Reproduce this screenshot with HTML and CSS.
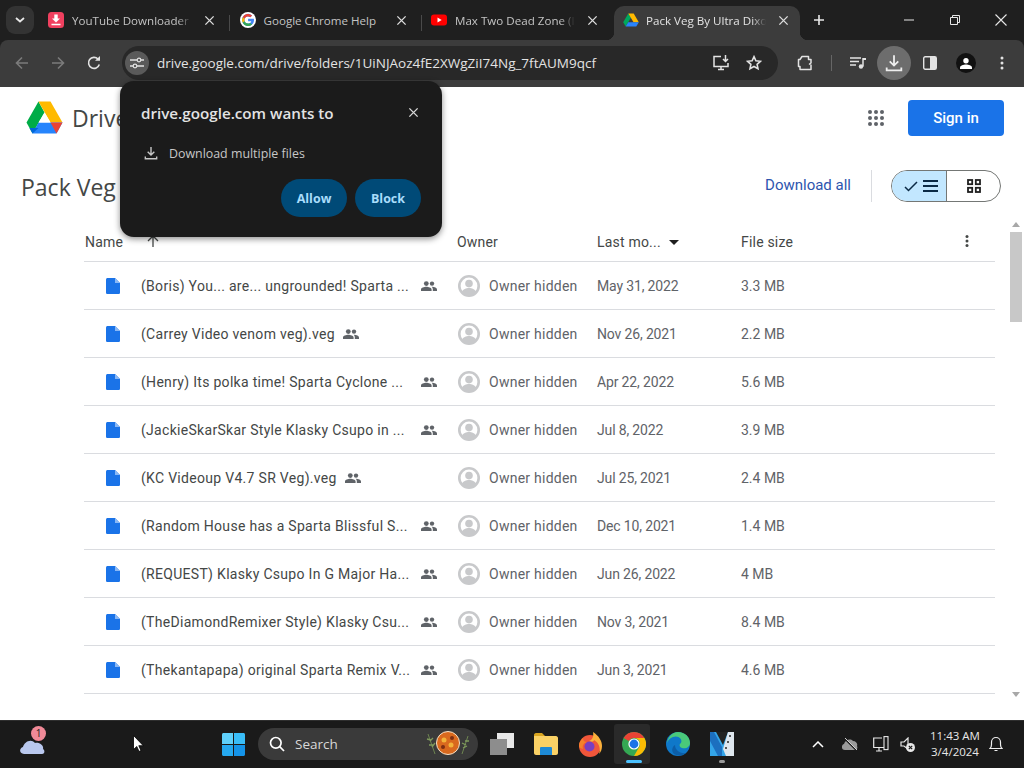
FILE: index.html
```html
<!DOCTYPE html>
<html lang="en">
<head>
<meta charset="utf-8">
<title>Pack Veg By Ultra Dixon</title>
<link rel="stylesheet" href="styles.css">
</head>
<body>
<svg class="defs" width="0" height="0" aria-hidden="true">
  <symbol id="file" viewBox="0 0 14 16"><path d="M1.600 0H9l5 5v9.400c0 .9-.7 1.600-1.600 1.600H1.600C.7 16 0 15.300 0 14.400V1.600C0 .7.700 0 1.600 0z" fill="#1a73e8"/><path d="M9 0l5 5H9z" fill="#8ab8f5"/></symbol>
  <symbol id="people" viewBox="0 0 16 10"><circle cx="5.300" cy="2.600" r="2.400" fill="#5f6368"/><circle cx="11" cy="2.600" r="2.200" fill="#5f6368"/><path d="M0 10V8.400C0 6.800 3.200 5.800 5.300 5.800s5.300 1 5.300 2.600V10zM11.800 10V8.200c0-1-.5-1.800-1.200-2.400 2.300-.2 5.400.8 5.400 2.600V10z" fill="#5f6368"/></symbol>
  <symbol id="avatar" viewBox="0 0 22 22"><circle cx="11" cy="11" r="11" fill="#c8c9cb"/><circle cx="11" cy="11" r="8.400" fill="#fff"/><circle cx="11" cy="8.600" r="3.800" fill="#c8c9cb"/><path d="M3.500 17.500c1.500-3.500 4.800-4.400 7.500-4.400s6 .9 7.500 4.400L15 21H7z" fill="#c8c9cb"/></symbol>
  <symbol id="x" viewBox="0 0 12 12"><path d="M1.500 1.500l9 9M10.500 1.500l-9 9" fill="none" stroke="currentColor" stroke-width="1.500"/></symbol>
  <symbol id="dl" viewBox="0 0 16 16"><path d="M8 1v9M4.200 6.500L8 10.300l3.800-3.800M1.500 12v2.500h13V12" fill="none" stroke="currentColor" stroke-width="1.600"/></symbol>
</svg>

<header class="chrome">
  <div class="tabstrip">
    <button class="tab-search"><svg width="10" height="6" viewBox="0 0 10 6"><path d="M1 1l4 3.500L9 1" fill="none" stroke="#e8e8e8" stroke-width="1.800"/></svg></button>
    <div class="tab tab-first">
      <svg class="favicon" viewBox="0 0 16 16"><rect width="16" height="16" rx="3.500" fill="#f0405f"/><path d="M6.300 2.500h3.400v4h2.300L8 10.500 4 6.500h2.300zM3.500 11.800h9v1.500h-9z" fill="#fff"/></svg>
      <span class="tab-title tab-fade">YouTube Downloader -</span>
      <svg class="tab-x"><use href="#x"/></svg>
    </div>
    <span class="tab-sep"></span>
    <div class="tab">
      <svg class="favicon" viewBox="0 0 16 16"><circle cx="8" cy="8" r="8" fill="#fff"/><path d="M13.800 6.700H8.100v2.500h3.200c-.4 1.500-1.700 2.400-3.300 2.400A3.600 3.600 0 0 1 4.500 8 3.600 3.600 0 0 1 8 4.400c.9 0 1.700.3 2.300.9l1.800-1.800A6 6 0 0 0 2 8a6 6 0 0 0 6 6c3.400 0 6-2.400 6-6 0-.5-.1-.9-.2-1.300z" fill="#4285f4"/><path d="M2.700 5.200A6 6 0 0 1 12.100 3.500l-1.800 1.800A3.600 3.600 0 0 0 4.700 6.700z" fill="#ea4335"/><path d="M2.700 5.200l2 1.500a3.600 3.600 0 0 0 0 2.600l-2 1.500a6 6 0 0 1 0-5.600z" fill="#fbbc05"/><path d="M2.700 10.800l2-1.500A3.600 3.600 0 0 0 8 11.600c.9 0 1.600-.2 2.200-.6l1.900 1.500A6 6 0 0 1 2.700 10.800z" fill="#34a853"/></svg>
      <span class="tab-title">Google Chrome Help</span>
      <svg class="tab-x"><use href="#x"/></svg>
    </div>
    <span class="tab-sep"></span>
    <div class="tab">
      <svg class="favicon" viewBox="0 0 16 16"><rect y="2.500" width="16" height="11" rx="3" fill="#f00"/><path d="M6.500 5.500L10.700 8l-4.200 2.500z" fill="#fff"/></svg>
      <span class="tab-title tab-fade">Max Two Dead Zone (I</span>
      <svg class="tab-x"><use href="#x"/></svg>
    </div>
    <div class="tab tab-active">
      <svg class="favicon" viewBox="0 0 16 15"><path d="M5.300 1L.2 9.800l2.500 4.200L8 5z" fill="#00a85d"/><path d="M5.300 1h5.400l5.100 8.800h-5.300z" fill="#ffba00"/><path d="M2.700 14h10.600l2.500-4.200H5.200z" fill="#2a84fc"/></svg>
      <span class="tab-title tab-fade">Pack Veg By Ultra Dixo</span>
      <svg class="tab-x"><use href="#x"/></svg>
    </div>
    <svg class="new-tab" width="12" height="12" viewBox="0 0 12 12"><path d="M6 1v10M1 6h10" stroke="#e8e8e8" stroke-width="1.600"/></svg>
    <div class="win-controls">
      <svg width="10" height="10" viewBox="0 0 10 10"><path d="M0 5h10" stroke="#e8e8e8"/></svg>
      <svg width="10" height="10" viewBox="0 0 10 10"><path d="M.5 2.500h7v7h-7zM2.500 2.500V.5h7v7h-2" fill="none" stroke="#e8e8e8"/></svg>
      <svg width="12" height="12" viewBox="0 0 12 12"><path d="M.5.500l11 11M11.500.5l-11 11" stroke="#e8e8e8" stroke-width="1.100"/></svg>
    </div>
  </div>
  <div class="toolbar">
    <svg class="nav" width="14" height="14" viewBox="0 0 14 14"><path d="M13 7H2M7 1.500L1.500 7 7 12.500" fill="none" stroke="#7b7b7b" stroke-width="1.600"/></svg>
    <svg class="nav" width="14" height="14" viewBox="0 0 14 14"><path d="M1 7h11M7 1.500L12.500 7 7 12.500" fill="none" stroke="#7b7b7b" stroke-width="1.600"/></svg>
    <svg class="nav" width="14" height="14" viewBox="0 0 14 14"><path d="M12.300 8.500A5.500 5.500 0 1 1 11 3" fill="none" stroke="#e3e3e3" stroke-width="1.600"/><path d="M8 4.800h5V0z" fill="#e3e3e3"/></svg>
    <div class="omnibox">
      <span class="site-chip"><svg width="14" height="12" viewBox="0 0 14 12"><path d="M0 3h7M11 3h3M0 9h3M7 9h7" stroke="#e3e3e3" stroke-width="1.300"/><circle cx="9" cy="3" r="1.800" fill="none" stroke="#e3e3e3" stroke-width="1.200"/><circle cx="5" cy="9" r="1.800" fill="none" stroke="#e3e3e3" stroke-width="1.200"/></svg></span>
      <span class="url">drive.google.com/drive/folders/1UiNJAoz4fE2XWgZiI74Ng_7ftAUM9qcf</span>
      <svg class="omni-install" width="18" height="16" viewBox="0 0 18 16"><path d="M8 1.500H1v10h14V8M5 14.500h6M8 11.500v3M12.500 0v6M10 4l2.500 2.500L15 4" fill="none" stroke="#e3e3e3" stroke-width="1.500"/></svg>
      <svg class="omni-star" width="16" height="16" viewBox="0 0 16 16"><path d="M8 1.700l1.900 4.100 4.500.5-3.300 3 .9 4.400L8 11.500l-4 2.200.9-4.400-3.300-3 4.500-.5z" fill="none" stroke="#e3e3e3" stroke-width="1.600"/></svg>
    </div>
    <div class="tool-icons">
      <svg class="ti-ext" width="16" height="16" viewBox="0 0 16 16"><path d="M5 1.500h6.500v3h2.500v3.500l-1.500 1 1.500 1V14.500H3v-3H1.500V4.500H3z" fill="none" stroke="#e3e3e3" stroke-width="1.500" stroke-linejoin="round"/></svg>
      <span class="ti-sep"></span>
      <svg class="ti-media" width="16" height="12" viewBox="0 0 16 12"><path d="M0 1h11M0 4.500h9M0 8h6" stroke="#e3e3e3" stroke-width="1.300"/><path d="M13 1v8.500" stroke="#e3e3e3" stroke-width="1.500"/><circle cx="11" cy="9.500" r="2.200" fill="#e3e3e3"/><path d="M13 1h3v2h-3z" fill="#e3e3e3"/></svg>
      <span class="ti-dl"><svg class="dl-icon"><use href="#dl"/></svg></span>
      <svg class="ti-side" width="14" height="14" viewBox="0 0 14 14"><rect x=".7" y=".7" width="12.600" height="12.600" rx="1.500" fill="none" stroke="#e3e3e3" stroke-width="1.400"/><path d="M7 1h6v12H7z" fill="#e3e3e3"/></svg>
      <span class="ti-prof"><svg width="12" height="11" viewBox="0 0 12 11"><circle cx="6" cy="2.800" r="2.700" fill="#fff"/><path d="M0 11V9.500C0 7.500 3.500 6.500 6 6.500s6 1 6 3V11z" fill="#fff"/></svg></span>
      <svg class="ti-menu" width="4" height="14" viewBox="0 0 4 14"><circle cx="2" cy="2" r="1.500" fill="#e3e3e3"/><circle cx="2" cy="7" r="1.500" fill="#e3e3e3"/><circle cx="2" cy="12" r="1.500" fill="#e3e3e3"/></svg>
    </div>
  </div>
</header>

<main class="page">
  <div class="drive-head">
    <svg class="drive-logo" width="37" height="33" viewBox="0 0 37 33"><path d="M12.500.5L.5 21.500l6 11 12-21z" fill="#00ac47"/><path d="M12.500.5h12l12 21h-12z" fill="#ffba00"/><path d="M6.500 32.500h24l6-11h-24z" fill="#2684fc"/><path d="M.5 21.500l3 5.500h9l-6 5.500z" fill="#0066da"/><path d="M36.500 21.500l-6 11-6-11z" fill="#ea4335"/><path d="M18.500 11.500l6 10h-12z" fill="#fff"/></svg>
    <span class="drive-name">Drive</span>
    <svg class="apps" width="16" height="16" viewBox="0 0 16 16"><g fill="#5f6368"><circle cx="2" cy="2" r="2"/><circle cx="8" cy="2" r="2"/><circle cx="14" cy="2" r="2"/><circle cx="2" cy="8" r="2"/><circle cx="8" cy="8" r="2"/><circle cx="14" cy="8" r="2"/><circle cx="2" cy="14" r="2"/><circle cx="8" cy="14" r="2"/><circle cx="14" cy="14" r="2"/></g></svg>
    <button class="sign-in">Sign in</button>
  </div>
  <div class="title-row">
    <h1 class="folder-title">Pack Veg</h1>
    <a class="download-all">Download all</a>
    <span class="title-sep"></span>
    <div class="view-toggle">
      <span class="vt-list"><svg width="14" height="11" viewBox="0 0 14 11"><path d="M1 6l3.500 3.500L13 1" fill="none" stroke="#0b2a45" stroke-width="1.500"/></svg><svg width="15" height="12" viewBox="0 0 15 12"><path d="M0 1h15M0 6h15M0 11h15" stroke="#0b2a45" stroke-width="1.800"/></svg></span>
      <span class="vt-grid"><svg width="14" height="14" viewBox="0 0 14 14"><g fill="none" stroke="#1f1f1f" stroke-width="1.800"><rect x="1" y="1" width="4.200" height="4.200"/><rect x="8.800" y="1" width="4.200" height="4.200"/><rect x="1" y="8.800" width="4.200" height="4.200"/><rect x="8.800" y="8.800" width="4.200" height="4.200"/></g></svg></span>
    </div>
  </div>
  <div class="list-wrap">
    <div class="list">
      <div class="row row-head">
        <div class="c-name"><span class="h-name">Name</span><svg class="h-arrow" width="12" height="12" viewBox="0 0 12 12"><path d="M6 12V1M1 6l5-5 5 5" fill="none" stroke="#444746" stroke-width="1.300"/></svg></div>
        <div>Owner</div>
        <div class="c-mod">Last mo...<svg class="h-caret" width="10" height="5" viewBox="0 0 10 5"><path d="M0 0h10L5 5z" fill="#1f1f1f"/></svg></div>
        <div class="c-size">File size<svg class="h-more" width="4" height="12" viewBox="0 0 4 12"><circle cx="2" cy="1.500" r="1.500" fill="#444746"/><circle cx="2" cy="6" r="1.500" fill="#444746"/><circle cx="2" cy="10.500" r="1.500" fill="#444746"/></svg></div>
      </div>
      <div class="row"><div class="c-name"><svg class="i-file"><use href="#file"/></svg><span class="fname">(Boris) You... are... ungrounded! Sparta ...</span><svg class="i-people"><use href="#people"/></svg></div><div class="c-owner"><svg class="i-av"><use href="#avatar"/></svg>Owner hidden</div><div class="c-date">May 31, 2022</div><div>3.3 MB</div></div>
      <div class="row row-short"><div class="c-name"><svg class="i-file"><use href="#file"/></svg><span class="fname">(Carrey Video venom veg).veg</span><svg class="i-people"><use href="#people"/></svg></div><div class="c-owner"><svg class="i-av"><use href="#avatar"/></svg>Owner hidden</div><div class="c-date">Nov 26, 2021</div><div>2.2 MB</div></div>
      <div class="row"><div class="c-name"><svg class="i-file"><use href="#file"/></svg><span class="fname">(Henry) Its polka time! Sparta Cyclone ...</span><svg class="i-people"><use href="#people"/></svg></div><div class="c-owner"><svg class="i-av"><use href="#avatar"/></svg>Owner hidden</div><div class="c-date">Apr 22, 2022</div><div>5.6 MB</div></div>
      <div class="row"><div class="c-name"><svg class="i-file"><use href="#file"/></svg><span class="fname">(JackieSkarSkar Style Klasky Csupo in ...</span><svg class="i-people"><use href="#people"/></svg></div><div class="c-owner"><svg class="i-av"><use href="#avatar"/></svg>Owner hidden</div><div class="c-date">Jul 8, 2022</div><div>3.9 MB</div></div>
      <div class="row row-short"><div class="c-name"><svg class="i-file"><use href="#file"/></svg><span class="fname">(KC Videoup V4.7 SR Veg).veg</span><svg class="i-people"><use href="#people"/></svg></div><div class="c-owner"><svg class="i-av"><use href="#avatar"/></svg>Owner hidden</div><div class="c-date">Jul 25, 2021</div><div>2.4 MB</div></div>
      <div class="row"><div class="c-name"><svg class="i-file"><use href="#file"/></svg><span class="fname">(Random House has a Sparta Blissful S...</span><svg class="i-people"><use href="#people"/></svg></div><div class="c-owner"><svg class="i-av"><use href="#avatar"/></svg>Owner hidden</div><div class="c-date">Dec 10, 2021</div><div>1.4 MB</div></div>
      <div class="row"><div class="c-name"><svg class="i-file"><use href="#file"/></svg><span class="fname">(REQUEST) Klasky Csupo In G Major Ha...</span><svg class="i-people"><use href="#people"/></svg></div><div class="c-owner"><svg class="i-av"><use href="#avatar"/></svg>Owner hidden</div><div class="c-date">Jun 26, 2022</div><div>4 MB</div></div>
      <div class="row"><div class="c-name"><svg class="i-file"><use href="#file"/></svg><span class="fname">(TheDiamondRemixer Style) Klasky Csu...</span><svg class="i-people"><use href="#people"/></svg></div><div class="c-owner"><svg class="i-av"><use href="#avatar"/></svg>Owner hidden</div><div class="c-date">Nov 3, 2021</div><div>8.4 MB</div></div>
      <div class="row"><div class="c-name"><svg class="i-file"><use href="#file"/></svg><span class="fname">(Thekantapapa) original Sparta Remix V...</span><svg class="i-people"><use href="#people"/></svg></div><div class="c-owner"><svg class="i-av"><use href="#avatar"/></svg>Owner hidden</div><div class="c-date">Jun 3, 2021</div><div>4.6 MB</div></div>
    </div>
    <div class="scrollbar">
      <span class="sb-up"></span>
      <span class="sb-thumb"></span>
      <span class="sb-down"></span>
    </div>
  </div>
</main>

<aside class="perm-popup">
  <div class="perm-head"><span>drive.google.com wants to</span><svg class="perm-x"><use href="#x"/></svg></div>
  <div class="perm-line"><svg class="perm-dl"><use href="#dl"/></svg><span>Download multiple files</span></div>
  <div class="perm-btns"><button class="perm-btn">Allow</button><button class="perm-btn">Block</button></div>
</aside>

<footer class="taskbar">
  <div class="weather">
    <svg width="26" height="16" viewBox="0 0 26 16"><path d="M4 16c-5 0-5-6-1-7 1-5 8-9 12-4 5-1 9 3 8 6 2 1 2 5-1 5z" fill="#b9c8ee"/></svg>
    <span class="badge">1</span>
  </div>
  <div class="task-center">
    <svg class="start" width="23" height="23" viewBox="0 0 23 23"><path d="M0 1.500C0 .7.700 0 1.500 0H11v11H0z" fill="#5fd0fb"/><path d="M12 0h9.500c.8 0 1.500.7 1.500 1.500V11H12z" fill="#39bdf8"/><path d="M0 12h11v11H1.500C.7 23 0 22.300 0 21.500z" fill="#25a8ef"/><path d="M12 12h11v9.500c0 .8-.7 1.500-1.500 1.500H12z" fill="#1493e8"/></svg>
    <div class="search">
      <svg width="16" height="16" viewBox="0 0 16 16"><circle cx="6.800" cy="6.800" r="5.300" fill="none" stroke="#fff" stroke-width="1.700"/><path d="M10.700 10.700L15 15" stroke="#fff" stroke-width="1.700"/></svg>
      <span class="search-text">Search</span>
      <svg class="doodle" width="44" height="26" viewBox="0 0 44 26"><path d="M2 3l7 20M42 5l-6 18" stroke="#6d8450" stroke-width="1" fill="none"/><path d="M1 8l4 1M7 7l-3 3M3 14l4 0M9 12l-3 4M39 10l4 0M36 12l4 2M37 17l4-2" stroke="#7f9a5c" stroke-width="1.300"/><circle cx="22" cy="12" r="11.500" fill="#d9691e" stroke="#f3e1c8" stroke-width="1"/><circle cx="18" cy="9" r="2.500" fill="#f2b33a"/><circle cx="25" cy="14" r="2.500" fill="#f2b33a"/><circle cx="17" cy="16" r="2" fill="#7c2e12"/><circle cx="26" cy="7" r="2" fill="#7c2e12"/></svg>
    </div>
    <svg class="t-view" width="24" height="22" viewBox="0 0 24 22"><rect x="7" y="0" width="17" height="15" fill="#e8e8e8"/><rect x="0" y="6" width="17" height="16" fill="#8d8d8d"/></svg>
    <svg class="t-files" width="24" height="22" viewBox="0 0 24 22"><path d="M0 2c0-1 .7-2 2-2h6l3 3h-11z" fill="#d9a520"/><path d="M0 3h22c1 0 2 1 2 2v15c0 1-1 2-2 2H2c-1 0-2-1-2-2z" fill="#fad165"/><path d="M7 14h10c1 0 1 1 1 1v7H6v-7s0-1 1-1z" fill="#1d8ad6"/></svg>
    <svg class="t-fox" width="24" height="25" viewBox="0 0 24 25"><circle cx="12" cy="14" r="11" fill="#f0563a"/><path d="M15 0c6 4 9 9 9 14 0 3-1 6-3 8 2-6 0-11-5-14 0 2-3 2-5 1 3-1 5-4 4-9z" fill="#fbb03b"/><path d="M1 14c0-4 2-6 4-8 0 3 2 4 4 4-3 1-5 3-4 7-2-1-4-1-4-3z" fill="#f5822a"/><circle cx="11.500" cy="14.500" r="5" fill="#7a3fc0"/></svg>
    <div class="t-chrome">
      <svg width="24" height="24" viewBox="0 0 24 24"><circle cx="12" cy="12" r="12" fill="#34a853"/><path d="M12 0a12 12 0 0 1 10.400 6H12a6 6 0 0 0-5.200 3L1.600 6A12 12 0 0 1 12 0z" fill="#ea4335"/><path d="M22.400 6A12 12 0 0 1 12 24l5.200-9A6 6 0 0 0 12 6z" fill="#fbbc04"/><circle cx="12" cy="12" r="5.600" fill="#fff"/><circle cx="12" cy="12" r="4.400" fill="#1a73e8"/></svg>
      <span class="running run-active"></span>
    </div>
    <svg class="t-edge" width="24" height="24" viewBox="0 0 24 24"><circle cx="12" cy="12" r="12" fill="#0f78c9"/><path d="M12 0c7 0 12 5 12 11 0 4-4 6-8 5-3-1-3-4-1-5 2-4-3-8-8-6-3 1-5 3-6 6C2 5 6 0 12 0z" fill="#4ac97a"/><path d="M9 13c0 5 5 9 11 8-3 3-9 3-12 1-3-3-2-7 1-9z" fill="#0c5ea8"/></svg>
    <div class="t-vegas">
      <svg width="24" height="24" viewBox="0 0 24 24"><rect width="24" height="24" fill="#33a4e8"/><path d="M0 0h4l8 15v9H8L0 9z" fill="#1c6fbf"/><path d="M6 0h12l-5 13z" fill="#222"/><path d="M18 0h6v24h-8l-3-7z" fill="#dfe7ee"/><path d="M19 3h2v2h-2zM17 9h2v2h-2zM15 15h2v2h-2z" fill="#555"/></svg>
      <span class="running"></span>
    </div>
  </div>
  <div class="tray">
    <svg class="tr-caret" width="12" height="7" viewBox="0 0 12 7"><path d="M1 6l5-5 5 5" fill="none" stroke="#fff" stroke-width="1.500"/></svg>
    <svg class="tr-cloud" width="16" height="14" viewBox="0 0 16 14"><path d="M3 13c-4 0-4-5-1-6 1-4 6-6 9-3 3 0 5 3 4 5 1 2 0 4-2 4z" fill="#9a9a9a"/><path d="M2 1l12 12" stroke="#1a1a1a" stroke-width="1.500"/><path d="M3 1l12 12" stroke="#d0d0d0"/></svg>
    <svg class="tr-net" width="16" height="16" viewBox="0 0 16 16"><path d="M9 2H.7v9.500H12V8M6 11.500V15M3 15h6" fill="none" stroke="#e8e8e8" stroke-width="1.200"/><rect x="11" y=".6" width="4" height="13" fill="#1a1a1a" stroke="#e8e8e8" stroke-width="1.100"/></svg>
    <svg class="tr-snd" width="15" height="15" viewBox="0 0 15 15"><path d="M1 5h3l4-4v11L4 9H1z" fill="none" stroke="#e8e8e8" stroke-width="1.200"/><circle cx="10.500" cy="10.500" r="4.500" fill="#e8e8e8"/><path d="M8.800 8.800l3.400 3.400M12.200 8.800l-3.400 3.400" stroke="#1a1a1a" stroke-width="1.200"/></svg>
    <div class="clock"><span>11:43 AM</span><span>3/4/2024</span></div>
    <svg class="tr-bell" width="14" height="16" viewBox="0 0 14 16"><path d="M1 12.500c1-1 1.500-2 1.500-4V6a4.500 4.500 0 0 1 9 0v2.500c0 2 .5 3 1.500 4zM5.500 14.500h3" fill="none" stroke="#f0f0f0" stroke-width="1.200"/></svg>
  </div>
</footer>

<svg class="cursor" width="11" height="17" viewBox="0 0 11 17"><path d="M.5.500v14l3.300-3 2.200 5 2-1-2.200-4.800h4.500z" fill="#fff" stroke="#000" stroke-width=".8"/></svg>
</body>
</html>
```
FILE: styles.css
```css
* { box-sizing: border-box; }
html, body { margin: 0; padding: 0; height: 768px; overflow: hidden; }
body {
  width: 1024px;
  display: flex;
  flex-direction: column;
  position: relative;
  font-family: Roboto, "Liberation Sans", sans-serif;
  background: #fff;
}
button { font: inherit; border: 0; padding: 0; }
.defs { position: absolute; }

/* browser chrome */
.chrome { flex: none; height: 87px; display: flex; flex-direction: column; background: #1f1f1f; font-family: "Open Sans", "Noto Sans", sans-serif; }
.tabstrip { height: 40px; display: flex; align-items: flex-end; padding-left: 6px; }
.tab-search { width: 28px; height: 28px; margin-bottom: 6px; border-radius: 9px; background: #333; display: flex; align-items: center; justify-content: center; }
.tab { width: 180px; height: 34px; display: flex; align-items: center; padding: 0 0 6px 8px; color: #c4c4c4; font-size: 11.600px; }
.tab-first { margin-left: 6px; }
.favicon { width: 16px; height: 16px; flex: none; }
.tab-title { width: 132px; flex: none; margin-left: 8px; white-space: nowrap; }
.tab-fade { -webkit-mask-image: linear-gradient(to right, #000 80%, transparent 91%); mask-image: linear-gradient(to right, #000 80%, transparent 91%); }
.tab-x { width: 11px; height: 11px; flex: none; color: #dcdcdc; }
.tab-sep { width: 1px; height: 16px; margin: 0 1.500px 9px 9px; background: #4a4a4a; }
.tab-active { width: 186px; margin-left: 11px; padding-left: 9px; background: #3c3c3c; border-radius: 10px 10px 0 0; color: #e3e3e3; position: relative; }
.tab-active::before, .tab-active::after { content: ""; position: absolute; bottom: 0; width: 8px; height: 8px; }
.tab-active::before { left: -8px; background: radial-gradient(circle at 0 0, transparent 8px, #3c3c3c 8.500px); }
.tab-active::after { right: -8px; background: radial-gradient(circle at 100% 0, transparent 8px, #3c3c3c 8.500px); }
.tab-active .tab-title { margin-left: 7px; }
.new-tab { margin: 0 0 14px 13px; }
.win-controls { margin-left: auto; width: 140px; display: flex; align-items: center; justify-content: space-between; padding: 0 17px 0 20px; height: 40px; }
.toolbar { height: 47px; background: #3c3c3c; border-radius: 8px 8px 0 0; display: flex; align-items: center; padding: 0 0 1px 15px; }
.nav { margin-right: 22px; }
.nav:nth-child(3) { margin-right: 21px; }
.omnibox { width: 656px; height: 34px; border-radius: 17px; background: #282828; display: flex; align-items: center; padding: 0 16px 0 3px; }
.site-chip { width: 24px; height: 24px; border-radius: 50%; background: #5a5a5a; display: flex; align-items: center; justify-content: center; flex: none; }
.url { margin-left: 8px; color: #e3e3e3; font-size: 13.500px; white-space: nowrap; flex: 1; padding-bottom: 1px; }
.omni-star { margin-left: 15px; }
.tool-icons { display: flex; align-items: center; flex: 1; padding-left: 19px; }
.ti-sep { width: 1px; height: 16px; background: #666; margin: 0 18px 0 18px; }
.ti-media { margin-right: 11px; }
.ti-dl { width: 34px; height: 34px; border-radius: 50%; background: #6d6d6d; display: flex; align-items: center; justify-content: center; }
.dl-icon { width: 18px; height: 18px; color: #eee; }
.ti-side { margin: 0 19px 0 12px; }
.ti-prof { width: 20px; height: 20px; border-radius: 50%; background: #111; display: flex; align-items: center; justify-content: center; overflow: hidden; }
.ti-menu { margin-left: 24px; }

/* page */
.page { flex: none; height: 633px; background: #fff; display: flex; flex-direction: column; overflow: hidden; }
.drive-head { flex: none; height: 62px; display: flex; align-items: center; padding: 0 20px 0 26px; }
.drive-logo { margin-right: 9px; margin-top: -1px; }
.drive-name { font-size: 23px; color: #444746; font-family: "Open Sans", Roboto, sans-serif; }
.apps { margin-left: auto; margin-right: 24px; }
.sign-in { width: 96px; height: 36px; background: #1a73e8; color: #fff; border-radius: 4px; font-size: 15px; font-weight: 500; }
.title-row { flex: none; height: 70px; display: flex; align-items: center; padding: 4px 23px 0 21px; }
.folder-title { margin: 2px 0 0; font-size: 23px; font-weight: 400; color: #444746; font-family: "Open Sans", Roboto, sans-serif; }
.download-all { margin-left: auto; margin-top: -2px; color: #2d55ae; font-size: 15px; }
.title-sep { width: 1px; height: 32px; background: #dadce0; margin: 0 18px 0 20px; }
.title-sep { margin-right: 18px; }
.view-toggle { width: 110px; height: 32px; border: 1px solid #747775; border-radius: 16px; display: flex; overflow: hidden; margin-left: 1px; }
.vt-list { width: 55px; background: #c2e7ff; border-right: 1px solid #747775; display: flex; align-items: center; justify-content: center; gap: 5px; padding-left: 4px; }
.vt-grid { flex: 1; display: flex; align-items: center; justify-content: center; }
.list-wrap { flex: 1; display: flex; min-height: 0; }
.list { width: 1008px; padding: 0 13px 0 84px; }
.row { display: grid; grid-template-columns: 373px 140px 144px 1fr; height: 48px; border-bottom: 1px solid #dadce0; align-items: center; font-size: 14px; color: #5f6368; }
.row-head { height: 43px; margin-bottom: 0; color: #444746; letter-spacing: .2px; }
.row-head > div { padding-top: 4px; }
.c-name { display: flex; align-items: center; min-width: 0; }
.h-name { margin-left: 1px; }
.h-arrow { margin-left: 24px; margin-top: -2px; }
.c-mod, .c-size { display: flex; align-items: center; }
.h-caret { margin-left: 8px; }
.h-more { margin-left: auto; margin-right: 26px; margin-top: -2px; }
.i-file { width: 14px; height: 16px; flex: none; margin-left: 22px; }
.fname { margin-left: 21px; color: #444746; white-space: nowrap; letter-spacing: .3px; }
.i-people { width: 16px; height: 10px; flex: none; margin-left: auto; margin-right: 20px; }
.row-short .i-people { margin-left: 8px; }
.c-owner { display: flex; align-items: center; letter-spacing: .25px; }
.c-date { letter-spacing: -.15px; }
.i-av { width: 22px; height: 22px; margin: 0 9px 0 1px; flex: none; }
.scrollbar { width: 16px; display: flex; flex-direction: column; align-items: center; padding-top: 3px; height: 478px; }
.sb-up, .sb-down { width: 0; height: 0; border-left: 4px solid transparent; border-right: 4px solid transparent; }
.sb-up { border-bottom: 5px solid #a8a8a8; }
.sb-down { border-top: 5px solid #a8a8a8; margin-top: auto; }
.sb-thumb { width: 12px; height: 90px; margin-top: 5px; background: #c8c8c8; }

/* permission popup */
.perm-popup { position: absolute; left: 120px; top: 81px; width: 322px; height: 156px; background: #1b1b1b; border-radius: 14px; box-shadow: 0 2px 6px rgba(0,0,0,.45); padding: 0 21px; font-family: "Open Sans", "Noto Sans", sans-serif; color: #c7c7c7; }
.perm-head { height: 64px; display: flex; align-items: center; justify-content: space-between; color: #e3e3e3; font-size: 15.200px; font-weight: 600; }
.perm-x { width: 11px; height: 11px; color: #d8d8d8; margin: -2px 2px 0 0; }
.perm-line { display: flex; align-items: center; font-size: 12.400px; gap: 11px; margin-top: -1px; height: 18px; }
.perm-dl { width: 14px; height: 14px; color: #c7c7c7; margin-left: 3px; flex: none; }
.perm-btns { display: flex; justify-content: flex-end; gap: 8px; margin-top: 17px; }
.perm-btn { width: 66px; height: 38px; border-radius: 19px; background: #004a77; color: #a8dcfb; font-size: 12.500px; font-weight: 700; font-family: inherit; }

/* taskbar */
.taskbar { flex: none; height: 48px; background: #1a1a1a; border-top: 1px solid #2e2e2e; padding-bottom: 1px; display: flex; align-items: center; position: relative; font-family: "Open Sans", "Noto Sans", sans-serif; color: #e8e8e8; }
.weather { position: relative; width: 26px; margin-left: 20px; height: 16px; margin-top: 2px; }
.badge { position: absolute; left: 11px; top: -11px; width: 15px; height: 15px; border-radius: 50%; background: #f08a98; color: #222; font-size: 10px; line-height: 15px; text-align: center; }
.task-center { display: flex; align-items: center; margin-left: 176px; }
.search { width: 220px; height: 32px; border-radius: 16px; background: #3a3a3a; display: flex; align-items: center; padding: 0 8px 0 11px; margin: 0 12px 0 13px; }
.search-text { margin-left: 10px; font-size: 13.500px; color: #d8d8d8; }
.doodle { margin-left: auto; }
.t-files { margin-left: 20px; }
.t-fox { margin-left: 20px; }
.t-chrome { width: 36px; height: 40px; margin-left: 12px; background: #2a2a2a; border-radius: 3px; display: flex; flex-direction: column; align-items: center; padding: 8px 0 0 4px; position: relative; }
.t-edge { margin-left: 16px; }
.t-vegas { width: 24px; margin-left: 20px; position: relative; height: 24px; }
.running { position: absolute; left: 50%; bottom: -7px; width: 6px; height: 3px; margin-left: -3px; border-radius: 2px; background: #9a9a9a; }
.t-chrome .run-active { bottom: 1px; width: 16px; margin-left: -6px; background: #4cc2ff; }
.tray { display: flex; align-items: center; margin-left: 78px; }
.tr-cloud { margin-left: 18px; }
.tr-net { margin-left: 15px; }
.tr-snd { margin-left: 11px; }
.clock { width: 60px; margin-left: 10px; display: flex; flex-direction: column; align-items: center; font-size: 11.500px; line-height: 16px; }
.tr-bell { margin-left: 4px; }
.cursor { position: absolute; left: 133px; top: 735px; }
```
